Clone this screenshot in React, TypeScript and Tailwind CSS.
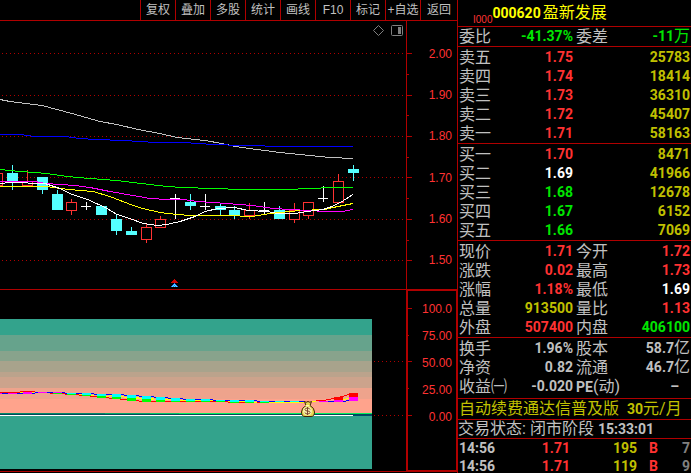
import React from "react";

type Tone = "red" | "green" | "white" | "yellow" | "gray";

const toneClass: Record<Tone, string> = {
  red: "text-[#ff3232]",
  green: "text-[#00e600]",
  white: "text-white",
  yellow: "text-[#c0c000]",
  gray: "text-[#c0c0c0]",
};

const tools = ["复权", "叠加", "多股", "统计", "画线", "F10", "标记", "+自选", "返回"];

const asks: [string, string, Tone, string][] = [
  ["卖五", "1.75", "red", "25783"],
  ["卖四", "1.74", "red", "18414"],
  ["卖三", "1.73", "red", "36310"],
  ["卖二", "1.72", "red", "45407"],
  ["卖一", "1.71", "red", "58163"],
];

const bids: [string, string, Tone, string][] = [
  ["买一", "1.70", "red", "8471"],
  ["买二", "1.69", "white", "41966"],
  ["买三", "1.68", "green", "12678"],
  ["买四", "1.67", "green", "6152"],
  ["买五", "1.66", "green", "7069"],
];

interface Quote {
  label: string;
  value: string;
  tone: Tone;
  label2: string;
  value2: string;
  unit2?: string;
  tone2: Tone;
}

const ratio: Quote[] = [
  { label: "委比", value: "-41.37%", tone: "green", label2: "委差", value2: "-11", unit2: "万", tone2: "green" },
];

const quotes: Quote[] = [
  { label: "现价", value: "1.71", tone: "red", label2: "今开", value2: "1.72", tone2: "red" },
  { label: "涨跌", value: "0.02", tone: "red", label2: "最高", value2: "1.73", tone2: "red" },
  { label: "涨幅", value: "1.18%", tone: "red", label2: "最低", value2: "1.69", tone2: "white" },
  { label: "总量", value: "913500", tone: "yellow", label2: "量比", value2: "1.13", tone2: "red" },
  { label: "外盘", value: "507400", tone: "red", label2: "内盘", value2: "406100", tone2: "green" },
];

const basics: Quote[] = [
  { label: "换手", value: "1.96%", tone: "gray", label2: "股本", value2: "58.7", unit2: "亿", tone2: "gray" },
  { label: "净资", value: "0.82", tone: "gray", label2: "流通", value2: "46.7", unit2: "亿", tone2: "gray" },
  { label: "收益㈠", value: "-0.020", tone: "gray", label2: "PE(动)", value2: "–", tone2: "gray" },
];

const trades: [string, string, string, string, string][] = [
  ["14:56", "1.71", "195", "B", "7"],
  ["14:56", "1.71", "119", "B", "9"],
];

type Kind = "up" | "down" | "flat";
// left edge of body, body top, body bottom, wick top, wick bottom
const candles: [Kind, number, number, number, number, number][] = [
  ["up", -8, 173, 186, 173, 186],
  ["down", 7, 173, 181, 165, 190],
  ["up", 22, 181, 186, 170, 186],
  ["down", 37, 177, 190, 177, 194],
  ["down", 52, 194, 210, 190, 210],
  ["up", 66, 202, 211, 199, 215],
  ["flat", 81, 206, 207, 202, 210],
  ["down", 96, 206, 215, 206, 215],
  ["down", 111, 219, 231, 215, 235],
  ["down", 126, 231, 235, 227, 235],
  ["up", 141, 227, 240, 224, 243],
  ["up", 155, 219, 228, 216, 228],
  ["flat", 170, 198, 199, 194, 219],
  ["down", 185, 202, 206, 194, 210],
  ["flat", 200, 206, 207, 194, 210],
  ["down", 215, 206, 210, 203, 215],
  ["down", 229, 210, 215, 206, 219],
  ["up", 244, 210, 216, 203, 219],
  ["flat", 259, 210, 211, 202, 215],
  ["down", 274, 210, 219, 206, 219],
  ["up", 289, 210, 220, 203, 223],
  ["up", 303, 202, 216, 202, 219],
  ["flat", 318, 198, 199, 186, 202],
  ["up", 333, 181, 203, 174, 203],
  ["down", 348, 169, 173, 165, 181],
];

const averages: [string, string][] = [
  ["#c0c0c0", "0,99 10,101 42,105 57,109 72,113 100,121 117,124 138,129 160,133 177,137 205,140 222,143 235,146 257,149 280,152 300,154 330,157 353,158"],
  ["#0000ff", "0,134 20,134 35,136 65,136 80,138 95,139 124,140 140,141 155,142 183,142 213,144 242,145 287,146 353,146"],
  ["#00ff00", "0,169 20,171 35,172 47,173 67,176 90,178 117,180 133,182 167,186 183,187 213,188 242,189 287,189 310,188 332,187 353,187"],
  ["#ffff00", "0,186 47,186 60,188 80,190 93,191 110,196 133,205 143,208 160,212 177,214 190,215 227,215 252,216 270,213 290,211 300,210 325,209 333,207 353,203"],
  ["#ff00ff", "0,181 35,181 45,183 75,185 90,187 110,191 133,195 150,198 167,199 183,199 197,201 227,203 252,205 273,208 290,209 310,210 323,211 342,211 353,209"],
  ["#ffffff", "0,183 10,182 45,183 60,188 72,194 88,199 107,208 117,214 130,218 143,223 158,225 167,224 180,221 195,216 205,211 218,208 235,207 248,210 268,211 277,213 295,213 307,211 323,209 332,206 342,201 353,194"],
];

const priceGrid = [53, 95, 136, 177, 219, 260];
const priceHalf = [74, 115, 157, 198, 240];

function PriceChart() {
  return (
    <svg viewBox="0 21 406 268" preserveAspectRatio="none" shapeRendering="crispEdges" className="block h-[268px] min-w-0 flex-1" role="img" aria-label="K线图">
      {priceGrid.map((y) => (
        <line key={y} x1="2" x2="406" y1={y + 0.5} y2={y + 0.5} stroke="#b00000" strokeDasharray="1 3" />
      ))}
      {candles.map(([kind, x, top, bottom, high, low]) =>
        kind === "up" ? (
          <g key={x} fill="none" stroke="#ff3232">
            <path d={`M${x + 5.5} ${high}V${top}M${x + 5.5} ${bottom}V${low}`} />
            <rect x={x + 0.5} y={top + 0.5} width="10" height={bottom - top - 1} />
          </g>
        ) : (
          <g key={x} fill={kind === "down" ? "#54ffff" : "#ffffff"}>
            <rect x={x} y={top} width={kind === "down" ? 11 : 10} height={bottom - top} />
            <rect x={x + 5} y={high} width="1" height={low - high} />
          </g>
        )
      )}
      {averages.map(([color, points]) => (
        <polyline key={color} points={points} transform="translate(0 .5)" fill="none" stroke={color} />
      ))}
      <path d="M174 279h1v1h1v1h1v1h1v1h-7v-1h1v-1h1v-1h1z" fill="#d00000" />
      <path d="M174 283h1v1h1v1h1v1h1v1h-7v-1h1v-1h1v-1h1z" fill="#2060ff" />
      <path d="M172 286h1M174 286h1M176 286h1M173 285h1M175 285h1M174 284h1" transform="translate(0 .5)" stroke="#54ffff" />
      <path d="M378.500 25.500l5 5-5 5-5-5z" fill="none" stroke="#808080" shapeRendering="auto" />
      <rect x="391.500" y="25.500" width="11" height="10" rx="1" fill="none" stroke="#808080" shapeRendering="auto" />
      <rect x="398" y="27" width="3" height="7" fill="#808080" />
    </svg>
  );
}

const bands: [number, number, string][] = [
  [319, 16, "#33a38c"],
  [335, 16, "#66a38c"],
  [351, 10, "#88a38c"],
  [361, 11, "#a8a38c"],
  [372, 5, "#bba38c"],
  [377, 11, "#cca38c"],
  [388, 11, "#eea38c"],
  [399, 14, "#ffa38c"],
  [413, 56, "#33a38c"],
];

const B = "#0000ff";
const C = "#00ffff";
const G = "#00ff00";
const M = "#ff00ff";
const R = "#ff0000";
const Y = "#ffff00";

// colour, x, y, width, height
const ribbon: [string, number, number, number, number][] = [
  [R, 0, 392, 20, 1], [M, 0, 393, 17, 1], [B, 2, 393, 6, 1], [B, 17, 393, 6, 1],
  [R, 20, 391, 15, 1], [Y, 20, 392, 3, 1], [M, 23, 392, 9, 2], [Y, 32, 392, 2, 1], [B, 32, 393, 3, 1],
  [B, 35, 392, 3, 1], [M, 38, 392, 9, 1], [B, 47, 392, 6, 1], [R, 50, 393, 3, 1],
  [M, 53, 392, 9, 1], [G, 53, 393, 9, 1], [B, 62, 392, 3, 1], [R, 62, 393, 3, 1],
  [B, 65, 393, 2, 1], [R, 65, 394, 2, 1], [C, 67, 393, 9, 1], [G, 67, 394, 9, 1],
  [B, 76, 393, 6, 1], [R, 76, 394, 3, 1], [Y, 79, 394, 3, 1], [R, 79, 395, 3, 1],
  [C, 82, 393, 9, 2], [G, 82, 395, 9, 1], [B, 91, 393, 3, 1], [Y, 91, 395, 3, 1], [R, 90, 396, 7, 1],
  [B, 94, 394, 3, 1], [C, 97, 394, 9, 2], [G, 97, 396, 9, 2], [B, 106, 394, 6, 1], [Y, 106, 396, 3, 1], [R, 106, 397, 3, 1], [Y, 109, 395, 3, 1],
  [R, 109, 398, 3, 1], [C, 112, 394, 9, 3], [G, 112, 397, 9, 2], [B, 121, 394, 3, 1], [Y, 121, 396, 3, 1], [R, 120, 399, 7, 1],
  [B, 124, 395, 3, 1], [Y, 124, 397, 3, 1], [C, 127, 395, 9, 3], [G, 127, 398, 9, 3], [B, 136, 395, 3, 1], [Y, 136, 397, 3, 2], [R, 136, 400, 3, 1],
  [B, 139, 396, 3, 1], [Y, 139, 398, 3, 1], [R, 139, 401, 3, 1], [C, 142, 396, 9, 3], [G, 142, 399, 9, 3], [B, 151, 396, 3, 1], [Y, 151, 398, 3, 2], [R, 151, 401, 5, 1],
  [B, 154, 397, 2, 1], [C, 156, 397, 9, 3], [G, 156, 400, 9, 2], [B, 165, 397, 3, 1], [Y, 165, 399, 6, 1], [R, 165, 401, 6, 1],
  [B, 168, 398, 3, 1], [C, 171, 398, 9, 3], [G, 171, 401, 9, 1], [B, 180, 398, 3, 1], [Y, 180, 400, 6, 1], [R, 180, 401, 6, 1],
  [B, 183, 399, 3, 1], [C, 186, 399, 9, 2], [G, 186, 401, 9, 1], [B, 195, 399, 6, 1], [Y, 195, 400, 6, 1], [R, 195, 401, 6, 1],
  [C, 201, 399, 9, 2], [G, 201, 401, 9, 1], [B, 210, 399, 3, 1], [Y, 210, 400, 3, 1], [R, 210, 401, 6, 1],
  [B, 213, 400, 17, 1], [C, 216, 400, 9, 1], [G, 216, 401, 9, 1], [R, 225, 401, 3, 1], [Y, 228, 401, 2, 1], [R, 228, 402, 2, 1],
  [C, 230, 400, 9, 2], [G, 230, 402, 9, 1], [B, 239, 400, 6, 1], [Y, 239, 401, 6, 1], [R, 239, 402, 6, 1],
  [C, 245, 400, 9, 2], [G, 245, 402, 9, 1], [B, 254, 400, 3, 1], [B, 257, 401, 3, 1], [Y, 254, 402, 3, 1], [R, 257, 402, 3, 1],
  [C, 260, 401, 9, 1], [G, 260, 402, 9, 1], [B, 269, 401, 6, 1], [Y, 269, 402, 6, 1],
  [C, 275, 401, 9, 1], [Y, 275, 402, 9, 1], [B, 284, 401, 6, 1], [Y, 284, 402, 6, 1],
  [C, 290, 401, 9, 1], [Y, 290, 402, 9, 1], [B, 299, 401, 6, 1], [Y, 299, 402, 6, 1],
  [Y, 312, 401, 4, 1], [R, 316, 400, 10, 1], [M, 319, 401, 9, 1], [B, 328, 401, 6, 1], [R, 326, 399, 5, 1], [R, 331, 398, 4, 1],
  [R, 334, 397, 9, 3], [M, 334, 400, 9, 2], [R, 340, 396, 4, 1], [R, 344, 395, 3, 1], [R, 347, 394, 2, 1],
  [Y, 343, 399, 3, 1], [Y, 346, 398, 3, 1], [B, 343, 401, 3, 1], [B, 346, 400, 3, 1],
  [R, 349, 393, 9, 4], [M, 349, 397, 9, 4],
];

function IndicatorChart() {
  return (
    <svg viewBox="0 290 406 181" preserveAspectRatio="none" shapeRendering="crispEdges" className="block h-[183px] min-w-0 flex-1 border-y border-[#b00000]" role="img" aria-label="指标图">
      {bands.map(([y, h, color]) => (
        <rect key={y} x="0" y={y} width="372" height={h} fill={color} />
      ))}
      <rect x="0" y="413" width="105" height="1" fill="#008868" />
      <rect x="105" y="413" width="45" height="1" fill="#00a868" />
      <rect x="150" y="413" width="29" height="1" fill="#00c868" />
      <rect x="179" y="413" width="193" height="1" fill="#00f060" />
      <rect x="0" y="414" width="372" height="1" fill="#004858" />
      <rect x="0" y="415" width="353" height="1" fill="#ffffff" />
      <rect x="353" y="415" width="19" height="1" fill="#004868" />
      <path d="M374 361.500h32M374 415.500h32" stroke="#b00000" strokeDasharray="1 3" />
      {ribbon.map(([color, x, y, w, h]) => (
        <rect key={`${color}-${x}-${y}`} x={x} y={y} width={w} height={h} fill={color} />
      ))}
      <g shapeRendering="auto">
        <path d="M304.500 401.500q1.500 1.500 3.500 0 2 1.500 3.500 0l-1.500 4q4.500 2.500 4.500 6.500 0 4.500-3.500 4.500h-6q-3.500 0-3.500-4.500 0-4 4.500-6.500z" fill="#e8d850" stroke="#402008" />
        <path d="M305.500 405.500h4" stroke="#fff8b0" />
        <ellipse cx="307.500" cy="411" rx="4.500" ry="4.500" fill="#f8f0a8" />
        <path d="M310 409.500q-.5-1.500-2.500-1.500-2.500 0-2.500 1.500t2.500 1.500q2.500 0 2.500 1.500t-2.500 1.500q-2.500 0-2.500-1.500M307.500 407v8" fill="none" stroke="#804830" />
      </g>
    </svg>
  );
}

function Toolbar() {
  return (
    <nav className="flex h-[21px] items-stretch justify-end border-b border-[#b00000]">
      {tools.map((t, i) => (
        <button
          key={t}
          type="button"
          className={`${i === tools.length - 1 ? "w-[37px]" : "w-[35px]"} whitespace-nowrap border-l border-[#b00000] text-center text-xs leading-5 text-[#c0c0c0]`}
        >
          {t}
        </button>
      ))}
    </nav>
  );
}

function Axis({ labels, rowClass }: { labels: string[]; rowClass: string }) {
  return (
    <div className="flex flex-1 flex-col text-right font-['Liberation_Sans',sans-serif] text-xs text-[#ff3232]">
      {labels.map((l) => (
        <div key={l} className={`flex items-center justify-end ${rowClass}`}>
          {l}
        </div>
      ))}
    </div>
  );
}

function BookTable({ rows }: { rows: [string, string, Tone, string][] }) {
  return (
    <section className="h-[97px] border-b border-[#b00000] pt-px">
      <table className="w-full table-fixed border-collapse">
        <tbody>
          {rows.map(([label, price, tone, volume]) => (
            <tr key={label} className="h-[19px] leading-[19px]">
              <th scope="row" className="w-[50px] p-0 pl-px text-left text-base leading-[19px] font-normal text-[#c0c0c0]">{label}</th>
              <td className={`w-[65px] p-0 text-right text-sm leading-[19px] font-bold ${toneClass[tone]}`}>{price}</td>
              <td className="p-0 pr-px text-right text-sm leading-[19px] font-bold text-[#c0c000]">{volume}</td>
            </tr>
          ))}
        </tbody>
      </table>
    </section>
  );
}

function QuoteTable({ rows, className }: { rows: Quote[]; className: string }) {
  return (
    <section className={`border-b border-[#b00000] ${className}`}>
      <table className="w-full table-fixed border-collapse whitespace-nowrap">
        <tbody>
          {rows.map((q) => (
            <tr key={q.label} className="h-[19px] leading-[19px]">
              <th scope="row" className="w-[50px] p-0 pl-px text-left text-base leading-[19px] font-normal text-[#c0c0c0]">{q.label}</th>
              <td className={`w-[65px] p-0 text-right text-sm leading-[19px] font-bold ${toneClass[q.tone]}`}>{q.value}</td>
              <th scope="row" className="w-[50px] p-0 pl-[3px] text-left text-base leading-[19px] font-normal text-[#c0c0c0]">
                {q.label2.startsWith("PE") ? (
                  <>
                    <span className="text-sm leading-none font-bold">PE</span>
                    <span>(动)</span>
                  </>
                ) : (
                  q.label2
                )}
              </th>
              <td className={`py-0 pl-0 text-right text-sm leading-[19px] font-bold ${toneClass[q.tone2]} ${q.value2 === "–" ? "pr-3" : "pr-px"}`}>
                {q.value2}
                {q.unit2 && <span className="text-base leading-none font-normal">{q.unit2}</span>}
              </td>
            </tr>
          ))}
        </tbody>
      </table>
    </section>
  );
}

function TradeTable() {
  return (
    <table className="w-full table-fixed border-collapse text-sm font-bold">
      <tbody>
        {trades.map(([time, price, volume, side, count]) => (
          <tr key={volume} className="h-[18px] leading-[18px]">
            <td className="w-[50px] p-0 pl-px text-[#c0c0c0]">{time}</td>
            <td className="w-[62px] p-0 text-right text-[#ff3232]">{price}</td>
            <td className="w-[67px] p-0 text-right text-[#c0c000]">{volume}</td>
            <td className="w-[21px] p-0 text-right text-[#ff3232]">{side}</td>
            <td className="p-0 pr-px text-right text-[#808080]">{count}</td>
          </tr>
        ))}
      </tbody>
    </table>
  );
}

export default function App() {
  return (
    <div className="flex h-screen items-stretch overflow-hidden bg-black font-['Roboto','Noto_Sans_CJK_SC',sans-serif]">
      <main className="flex min-w-0 flex-1 flex-col border-r border-[#b00000] font-['Liberation_Sans','Noto_Sans_CJK_SC',sans-serif]">
        <Toolbar />
        <div className="flex h-[268px]">
          <PriceChart />
          <div className="flex w-[51px] border-l border-[#b00000] pr-[5px]">
            <svg viewBox="407 21 5 268" className="block h-[268px] w-[5px]" shapeRendering="crispEdges" aria-hidden="true">
              {priceGrid.map((y) => (
                <rect key={y} x="407" y={y} width="5" height="1" fill="#b00000" />
              ))}
              {priceHalf.map((y) => (
                <rect key={y} x="407" y={y} width="2" height="1" fill="#b00000" />
              ))}
            </svg>
            <div className="flex flex-1 pt-3 pb-2">
              <Axis labels={["2.00", "1.90", "1.80", "1.70", "1.60", "1.50"]} rowClass="flex-1" />
            </div>
          </div>
        </div>
        <div className="flex h-[183px]">
          <IndicatorChart />
          <div className="flex w-[51px] border-y-2 border-r border-l-2 border-[#b00000] pr-1">
            <svg viewBox="408 291 4 179" className="block h-[179px] w-1" shapeRendering="crispEdges" aria-hidden="true">
              {[308, 361, 415].map((y) => (
                <rect key={y} x="408" y={y} width="4" height="1" fill="#b00000" />
              ))}
              {[335, 388].map((y) => (
                <rect key={y} x="408" y={y} width="1" height="1" fill="#b00000" />
              ))}
            </svg>
            <div className="flex flex-1 pt-1">
              <Axis labels={["100.0", "75.00", "50.00", "25.00", "0.00"]} rowClass="h-[27px]" />
            </div>
          </div>
        </div>
      </main>

      <aside className="w-[233px] shrink-0">
        <header className="flex h-[27px] items-center border-b border-[#b00000] pl-[15px] text-[#ffff00]">
          <span className="self-end font-['Liberation_Sans_Narrow',sans-serif] text-[10px] leading-3 text-[#ff3232]">I000</span>
          <h1 className="flex items-center gap-0.5 leading-[26px]">
            <span className="text-sm leading-[26px] font-bold">000620</span>
            <span className="text-base leading-[26px] font-normal">盈新发展</span>
          </h1>
        </header>
        <QuoteTable rows={ratio} className="h-5" />
        <BookTable rows={asks} />
        <BookTable rows={bids} />
        <QuoteTable rows={quotes} className="h-[97px] pt-px" />
        <QuoteTable rows={basics} className="h-[61px] pt-px" />
        <a href="#renew" className="flex h-[21px] items-center border-b border-[#b00000] pl-px text-base leading-5 font-normal whitespace-pre text-[#c0c000]">
          <span>自动续费通达信普及版</span>
          <span className="pl-2">
            <span className="text-sm leading-none font-bold">30</span>元/月
          </span>
        </a>
        <p className="flex h-[19px] items-center gap-1 border-b border-[#b00000] text-base leading-[18px] font-normal whitespace-nowrap text-[#c0c0c0]">
          <span>交易状态:</span>
          <span>闭市阶段</span>
          <span className="text-sm font-bold">15:33:01</span>
        </p>
        <TradeTable />
      </aside>
    </div>
  );
}
